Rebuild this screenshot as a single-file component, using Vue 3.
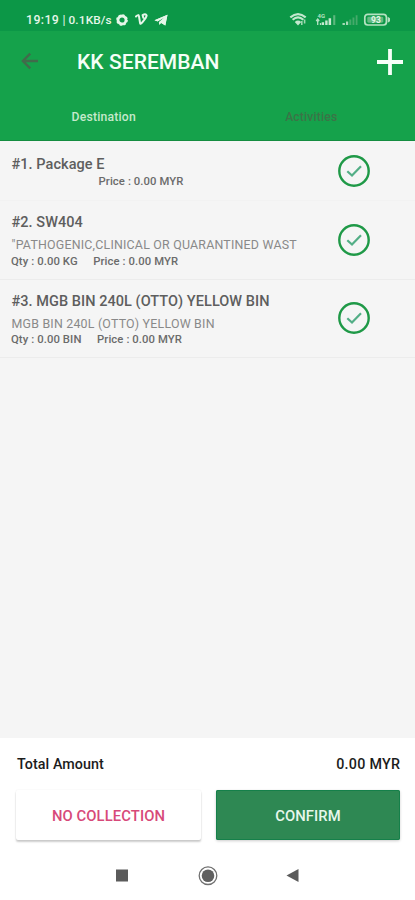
<script setup>
const items = [
  { title: '#1. Package E', desc: '', qty: '', price: 'Price : 0.00 MYR', kind: 'short' },
  { title: '#2. SW404', desc: '"PATHOGENIC,CLINICAL OR QUARANTINED WAST', qty: 'Qty : 0.00 KG', price: 'Price : 0.00 MYR', kind: 'waste' },
  { title: '#3. MGB BIN 240L (OTTO) YELLOW BIN', desc: 'MGB BIN 240L (OTTO) YELLOW BIN', qty: 'Qty : 0.00 BIN', price: 'Price : 0.00 MYR', kind: 'bin' }
]
</script>

<template>
  <div class="screen">
    <header class="status">
      <span class="clock">19:19</span>
      <span class="bar">|</span>
      <span class="speed">0.1KB/s</span>
      <svg class="gear" width="12" height="12" viewBox="0 0 12 12">
        <circle cx="6" cy="6" r="4" fill="none" stroke="#e6f6e9" stroke-width="2.8" />
        <circle cx="6" cy="6" r="5.2" fill="none" stroke="#e6f6e9" stroke-width="1.2" stroke-dasharray="2.1 1.98" />
      </svg>
      <svg class="vee" width="13" height="13" viewBox="0 0 13 13">
        <path d="M1 3.5Q3.6 .8 4 3.4L5 9.7Q5.3 12 7.5 9.2Q11.8 4 11.6 2.4Q10.6 .2 7.6 2.2L8.3 4.8" fill="none" stroke="#e6f6e9" stroke-width="2" stroke-linecap="round" stroke-linejoin="round" />
      </svg>
      <svg class="plane" width="14" height="12" viewBox="0 0 14 12">
        <path d="M.5 6.2L13.5.7L11.3 11.5L7.3 8.9L5.2 10.9L4.9 7.9L10.4 3.2L3.6 7.4Z" fill="#e6f6e9" />
        <path d="M.5 6.2L13.5.7L11.3 11.5L6.5 8.4L10.4 3.6L3.6 7.2Z" fill="#e6f6e9" />
      </svg>
      <div class="signals">
        <svg width="104" height="16" viewBox="0 0 104 16" fill="none">
          <g stroke="#c3e8ce">
            <path d="M1.3 5.4Q9 -1.3 16.7 5.4M3.6 7.8Q9 3.1 14.4 7.8" stroke-width="2.1" />
            <path d="M5.8 9.9Q9 7.1 12.2 9.9L9 13.4Z" fill="#c3e8ce" stroke="none" />
            <path d="M12.8 13V9M15.6 11.5V7.5" stroke-width="1.6" stroke="#9fd8b1" />
          </g>
          <text x="28.5" y="5.5" class="network">4G</text>
          <path d="M28.7 13V7M27.2 9L28.7 7L30.2 9M31.5 13V11" stroke="#b5e2c3" stroke-width="1.3" />
          <path d="M32.7 10.3H35.1V13H32.7ZM36.2 8.5H38.6V13H36.2ZM39.6 6.2H42.1V13H39.6Z" fill="#c7ead1" />
          <path d="M44.2 3.2H46.3V13H44.2Z" fill="#5db77e" />
          <path d="M53.5 11H55.9V13H53.5ZM57 9.5H59.2V13H57Z" fill="#a6d9b6" />
          <path d="M60.3 7.5H62.3V13H60.3ZM63.5 5.5H65.4V13H63.5ZM66.7 3.2H68.5V13H66.7Z" fill="#45aa6b" />
          <rect x="75.8" y="2.3" width="21.6" height="10.7" rx="3" stroke="#b4e2c1" stroke-width="1.7" />
          <path d="M98.7 4.7L101 6.2V9.2L98.7 10.7Z" fill="#b4e2c1" />
          <rect x="78.3" y="4.7" width="16" height="6" rx="1.4" fill="#65bb84" />
          <text x="82" y="10.8" class="charge">93</text>
        </svg>
      </div>
    </header>
    <div class="appbar">
      <svg class="back" width="18" height="18" viewBox="0 0 18 18">
        <path d="M9.2 1.6L1.9 9L9.2 16.4M2 9H17" fill="none" stroke="#416b4b" stroke-width="2.4" />
      </svg>
      <h1>KK SEREMBAN</h1>
      <svg class="plus" width="26" height="26" viewBox="0 0 26 26">
        <path d="M13 0V26M0 13H26" stroke="#f7fff8" stroke-width="3.8" />
      </svg>
    </div>
    <nav class="tabs">
      <span class="tab"><span class="destination">Destination</span></span>
      <span class="tab"><span class="activities">Activities</span></span>
    </nav>
    <main class="list">
      <article v-for="item in items" :key="item.title" class="item" :class="item.kind">
        <div class="text">
          <h2>{{ item.title }}</h2>
          <p v-if="item.desc" class="desc">{{ item.desc }}</p>
          <p class="meta"><span v-if="item.qty" class="qty">{{ item.qty }}</span><span class="price">{{ item.price }}</span></p>
        </div>
        <svg class="check" width="32" height="32" viewBox="0 0 32 32" fill="none">
          <circle cx="16" cy="16" r="14.7" stroke="#1f9947" stroke-width="2.4" />
          <path d="M9.3 16.2L14 20.5L23 11.3" stroke="#53ae86" stroke-width="2.2" />
        </svg>
      </article>
    </main>
    <footer class="summary">
      <div class="total"><span class="label">Total Amount</span><span class="amount">0.00 MYR</span></div>
      <div class="actions">
        <button class="decline"><span>NO COLLECTION</span></button>
        <button class="confirm"><span>CONFIRM</span></button>
      </div>
    </footer>
    <div class="system">
      <svg width="190" height="24" viewBox="0 0 190 24">
        <rect x="6" y="6.5" width="12" height="12" fill="#5b5b5b" />
        <circle cx="98" cy="12.7" r="8.8" fill="none" stroke="#707070" stroke-width="1.3" />
        <circle cx="98" cy="12.7" r="6.3" fill="#606060" />
        <path d="M176.5 12.5L188.5 6V19Z" fill="#5b5b5b" />
      </svg>
    </div>
  </div>
</template>

<style>
body { margin: 0; }
</style>
<style scoped>
* { box-sizing: border-box; }
.screen { width: 415px; height: 900px; display: flex; flex-direction: column; background: #f5f5f5; font-family: Roboto, sans-serif; overflow: hidden; }
h1, h2, p { margin: 0; white-space: nowrap; }
svg { display: block; flex: none; }
.status { height: 31px; flex: none; background: #0c9747; color: #e6f6e9; display: flex; align-items: center; padding: 8px 22px 0 26px; font-size: 12.3px; font-weight: 500; white-space: nowrap; }
.clock { width: 36.5px; letter-spacing: .4px; }
.bar { width: 6px; font-weight: 400; }
.speed { width: 47.5px; font-size: 11.8px; letter-spacing: .15px; }
.vee { margin-left: 7px; }
.plane { margin-left: 6px; }
.signals { margin-left: auto; }
.network { font-size: 6px; font-weight: 700; fill: #b5e2c3; }
.charge { font-size: 8.5px; font-weight: 700; fill: #e0f6e6; }
.appbar { height: 61px; flex: none; background: #15a24b; display: flex; align-items: center; padding: 0 12px 0 21px; }
.back { margin-top: -2px; }
h1 { margin-left: 38px; font-size: 21px; line-height: 26px; font-weight: 500; color: #f5fff7; letter-spacing: .06px; }
.plus { margin-left: auto; }
.tabs { height: 49px; flex: none; display: flex; background: #15a24b; border-bottom: 1px solid #148d40; font-size: 12.2px; font-weight: 500; line-height: 16px; }
.tab { flex: 1; display: flex; justify-content: center; align-items: center; padding-top: 2px; }
.destination { color: #c5e9cb; letter-spacing: .21px; }
.activities { color: #3b7447; letter-spacing: .15px; }
.list { flex: 1; }
.item { height: 79px; display: flex; justify-content: space-between; padding: 0 45px 0 11.5px; border-bottom: 1px solid #ececec; }
.item.short { height: 60px; border-bottom-color: #f2f2f2; }
.item.bin { height: 78px; }
.text { padding-top: 12px; }
h2 { font-size: 14.5px; line-height: 19px; font-weight: 500; color: #5e5e5e; letter-spacing: .05px; }
.desc { margin-top: 4px; font-size: 12.4px; line-height: 17px; color: #898989; letter-spacing: .21px; }
.waste .meta { margin-top: 1px; }
.meta { display: flex; margin-left: -.5px; font-size: 11.3px; line-height: 15px; font-weight: 500; color: #6b6b6b; letter-spacing: .09px; }
.qty { margin-right: 15.5px; }
.short .price { margin-left: 87.5px; }
.short .text { padding-top: 14px; }
.check { margin-top: 22.5px; }
.short .check { margin-top: 14px; }
.bin .check { margin-top: 22px; }
.summary { height: 113px; flex: none; background: #fff; padding: 17px 15px 10px 16px; }
.total { height: 35px; display: flex; justify-content: space-between; padding-left: 1px; font-size: 14.3px; line-height: 19px; font-weight: 500; color: #1c1c1c; }
.label { letter-spacing: .06px; }
.amount { letter-spacing: .25px; margin-right: -.2px; }
.actions { display: grid; grid-template-columns: 185px 184px; column-gap: 15px; }
button { height: 50px; border: 0; border-radius: 2px; padding: 1px 0 0; font: 500 14.8px/20px Roboto, sans-serif; letter-spacing: .1px; }
.decline { background: #fff; color: #d74979; box-shadow: 0 2px 2px #0003, 0 0 2px #0001; }
.confirm { background: #2e8853; color: #e8f7ec; box-shadow: inset 0 0 0 1px #15804a, 0 1px 3px #0003; }
.system { height: 49px; flex: none; background: #fff; padding: 12px 0 0 110px; }
</style>
